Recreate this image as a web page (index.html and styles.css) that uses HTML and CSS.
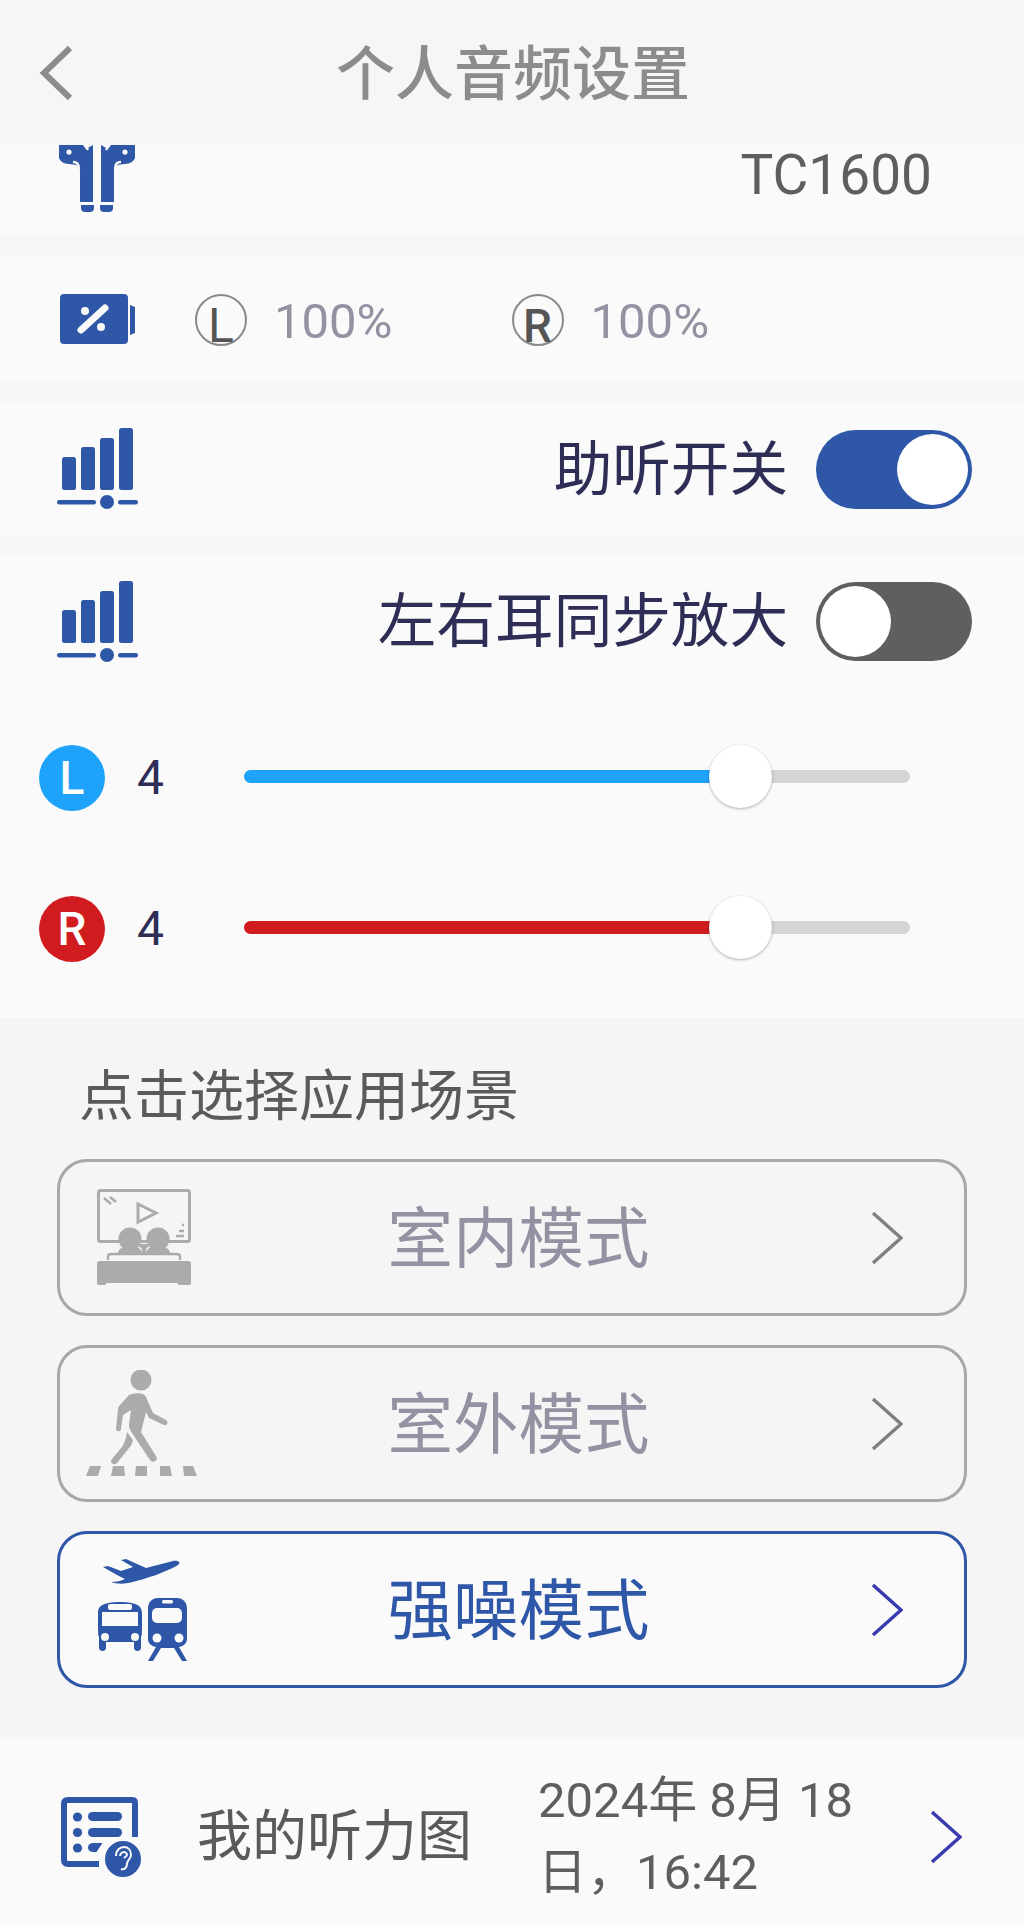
FILE: index.html
```html
<!DOCTYPE html>
<html lang="zh-CN">
<head>
<meta charset="utf-8">
<title>个人音频设置</title>
<link rel="stylesheet" href="styles.css">
</head>
<body>
<div class="page">
  <header class="header">
    <svg class="back" viewBox="38 38 36 60"><path d="M70 43 44 68l26 25" fill="none" stroke="#8c8c8c" stroke-width="6"/></svg>
    <h1 class="title">个人音频设置</h1>
  </header>

  <section class="card device">
    <svg class="buds" viewBox="58 145 78 68" fill="#2f57a8">
      <path d="M59 145h24l3 4 7-4v57H80v-31c0-3-1-5-4-6-2 0-4-1-7-1-5 0-9-3-10-6z"/>
      <path d="M135 145h-24l-3 4-7-4v57h13v-31c0-3 1-5 4-6 2 0 4-1 7-1 5 0 9-3 10-6z"/>
      <path d="M81 205h13v3c0 3-2 4-4 4h-5c-2 0-4-1-4-4zM100 205h13v3c0 3-2 4-4 4h-5c-2 0-4-1-4-4z"/>
      <circle cx="69" cy="152" r="2.6" fill="#fafafa"/><circle cx="125" cy="152" r="2.6" fill="#fafafa"/>
      <path d="M73 162c4 0 6 3 6 7M121 162c-4 0-6 3-6 7M85 145l3 5M109 145l-3 5" fill="none" stroke="#fafafa" stroke-width="2.4"/>
    </svg>
    <span class="model">TC1600</span>
  </section>

  <section class="card battery">
    <svg class="batt" viewBox="60 294 76 50">
      <rect x="60" y="294" width="68" height="50" rx="4" fill="#2f57a8"/>
      <path d="M130 305l5 2v26l-5 2z" fill="#2f57a8"/>
      <path d="M81 330l24-22" stroke="#fafafa" stroke-width="7" stroke-linecap="round"/>
      <circle cx="85" cy="311" r="4" fill="#fafafa"/><circle cx="101" cy="327" r="4" fill="#fafafa"/>
    </svg>
    <span class="ear ear-l">L</span>
    <span class="pct">100%</span>
    <span class="ear ear-r">R</span>
    <span class="pct">100%</span>
  </section>

  <section class="card switch-row">
    <svg class="level" viewBox="57 429 81 82" fill="#2f57a8">
      <rect x="62" y="458" width="14" height="33" rx="2.5"/><rect x="81" y="448" width="14" height="43" rx="2.5"/><rect x="100" y="439" width="14" height="52" rx="2.5"/><rect x="119" y="429" width="14" height="62" rx="2.5"/>
      <rect x="57" y="501" width="39" height="4.5" rx="2.2"/><circle cx="107" cy="503" r="7"/><rect x="118" y="501" width="20" height="4.5" rx="2.2"/>
    </svg>
    <span class="switch-label">助听开关</span>
    <span class="toggle toggle-on"><i class="toggle-knob"></i></span>
  </section>

  <section class="card gain">
    <div class="switch-row sync">
      <svg class="level" viewBox="57 429 81 82" fill="#2f57a8">
        <rect x="62" y="458" width="14" height="33" rx="2.5"/><rect x="81" y="448" width="14" height="43" rx="2.5"/><rect x="100" y="439" width="14" height="52" rx="2.5"/><rect x="119" y="429" width="14" height="62" rx="2.5"/>
        <rect x="57" y="501" width="39" height="4.5" rx="2.2"/><circle cx="107" cy="503" r="7"/><rect x="118" y="501" width="20" height="4.5" rx="2.2"/>
      </svg>
      <span class="switch-label">左右耳同步放大</span>
      <span class="toggle toggle-off"><i class="toggle-knob"></i></span>
    </div>
    <div class="slider-row">
      <span class="badge badge-l">L</span>
      <span class="value">4</span>
      <div class="track"><div class="fill fill-l" style="width:74.6%"></div><i class="thumb" style="left:74.6%"></i></div>
    </div>
    <div class="slider-row">
      <span class="badge badge-r">R</span>
      <span class="value">4</span>
      <div class="track"><div class="fill fill-r" style="width:74.6%"></div><i class="thumb" style="left:74.6%"></i></div>
    </div>
  </section>

  <section class="scenes">
    <h2 class="scenes-title">点击选择应用场景</h2>
    <div class="scene">
      <svg class="scene-icon" viewBox="96 1190 96 97">
        <rect x="98.5" y="1191.5" width="91" height="51" rx="2" fill="none" stroke="#ababab" stroke-width="3"/>
        <path d="M138 1205l18 9-18 9z" fill="none" stroke="#ababab" stroke-width="3"/>
        <path d="M104 1199l7 6M110 1198l6 5M176 1237h8M179 1232h5M182 1226h2" stroke="#ababab" stroke-width="2.4" fill="none"/>
        <g fill="#ababab">
          <circle cx="130" cy="1240" r="11.5"/><circle cx="158" cy="1240" r="11.5"/>
          <path d="M118 1255c0-5 4-8 12-8s12 3 12 8zM146 1255c0-5 4-8 12-8s12 3 12 8z"/>
          <path d="M137 1245h14l-5 5v4h-4v-4z"/>
          <path d="M97 1265c0-2 1-3 3-3h88c2 0 3 1 3 3v19c0 1-1 2-2 2h-10l-2-2h-70l-2 2H99c-1 0-2-1-2-2z"/>
        </g>
        <path d="M108 1261v-3c0-2 1-3 3-3h66c2 0 3 1 3 3v3" fill="none" stroke="#ababab" stroke-width="2.4"/>
      </svg>
      <span class="scene-name">室内模式</span>
      <svg class="chev" viewBox="0 0 32 54"><path d="M2 2l28 25L2 52" fill="none" stroke="#808080" stroke-width="3.5"/></svg>
    </div>
    <div class="scene">
      <svg class="scene-icon" viewBox="86 1370 112 108">
        <g fill="#ababab">
          <circle cx="141" cy="1380" r="10.5"/>
          <path d="M129 1395c5-2 15-3 17 2l7 16 13 7c3 2 1 6-2 5l-15-7-3-6-5 20 15 24c3 4-3 8-6 4l-18-27c-2-3-3-5-3-8l2-15-8 5-2 14c0 3-5 3-5 0l2-20c0-2 1-3 2-4z"/>
          <path d="M127 1432l6 8c-1 4-2 6-4 8l-12 15c-3 3-8 0-5-4l10-12c3-5 4-9 5-15z"/>
          <path d="M90 1466h11l-3 10H86zM113 1466h11l1 10h-14zM136 1466h11v10h-12zM160 1466h10l2 10h-12zM183 1466h10l4 10h-13z"/>
        </g>
      </svg>
      <span class="scene-name">室外模式</span>
      <svg class="chev" viewBox="0 0 32 54"><path d="M2 2l28 25L2 52" fill="none" stroke="#808080" stroke-width="3.5"/></svg>
    </div>
    <div class="scene scene-active">
      <svg class="scene-icon" viewBox="96 1560 96 106">
        <g fill="#2f57a8">
          <path d="M121 1563l5-1 20 9 27-7c6-1 8 2 5 4-8 5-30 14-50 18-6 1-12 1-17-1 6 0 10-1 14-3l-8-4-14-8 5-1 13 5 12-4z"/>
          <path d="M98 1630v-14c0-7 5-11 22-11s22 4 22 11v14c0 5 0 8-1 10v11c0 4-7 4-7 0v-6h-28v6c0 4-7 4-7 0v-11c-1-2-1-5-1-10z"/>
          <path d="M148 1612c0-7 4-11 10-11h19c6 0 10 4 10 11v30c0 4-3 7-8 8l8 14h-5l-8-13h-13l-8 13h-5l8-14c-5-1-8-4-8-8z"/>
        </g>
        <g fill="#fafafa">
          <rect x="108" y="1607" width="24" height="6" rx="2"/>
          <path d="M102 1615h36v14h-36z"/>
          <circle cx="105" cy="1640" r="4"/><circle cx="135" cy="1640" r="4"/>
          <rect x="162" y="1603" width="11" height="3.5" rx="1.5"/>
          <rect x="152" y="1611" width="30" height="15" rx="5"/>
          <circle cx="157" cy="1641" r="4.5"/><circle cx="179" cy="1641" r="4.5"/>
        </g>
      </svg>
      <span class="scene-name">强噪模式</span>
      <svg class="chev" viewBox="0 0 32 54"><path d="M2 2l28 25L2 52" fill="none" stroke="#3a3ab0" stroke-width="3.5"/></svg>
    </div>
  </section>

  <section class="card hearing">
    <svg class="report" viewBox="60 1798 82 82">
      <path d="M99 1866H68c-3 0-4-2-4-4v-56c0-3 1-4 4-4h64c3 0 3 1 3 4v33" fill="none" stroke="#2f57a8" stroke-width="6"/>
      <g fill="#2f57a8">
        <circle cx="77.5" cy="1819" r="4.6"/><circle cx="77.5" cy="1834.5" r="4.6"/><circle cx="77.5" cy="1850" r="4.6"/>
        <rect x="88" y="1814" width="34" height="9" rx="4.5"/><rect x="88" y="1830" width="34" height="9" rx="4.5"/><path d="M92.5 1845h10l-6 9h-4c-6 0-6-9 0-9z"/>
        <circle cx="123" cy="1861" r="19" stroke="#fafafa" stroke-width="2"/>
      </g>
      <path d="M116 1858c0-6 4-9 8-9s7 3 7 8c0 4-4 5-4 9s-3 6-6 5M120 1858c0-2 2-4 4-4s3 2 3 3-2 2-3 3" fill="none" stroke="#fafafa" stroke-width="2"/>
    </svg>
    <span class="hearing-label">我的听力图</span>
    <span class="hearing-date">2024年 8月 18日，16:42</span>
    <svg class="chev" viewBox="0 0 32 54"><path d="M2 2l28 25L2 52" fill="none" stroke="#3a3ab0" stroke-width="3.5"/></svg>
  </section>
</div>
</body>
</html>
```

FILE: styles.css
```css
* { box-sizing: border-box; }
html, body { margin: 0; padding: 0; }
body {
  width: 1024px;
  background: #f6f6f6;
  font-family: Roboto, "Noto Sans CJK SC", sans-serif;
}
.page { display: flex; flex-direction: column; height: 1924px; overflow: hidden; }

.header { height: 145px; display: flex; align-items: center; padding-left: 38px; position: relative; }
.back { width: 36px; height: 60px; }
.title {
  margin: 4px 0 0 -36px; padding-right: 36px; flex: 1; text-align: center;
  font-size: 59px; font-weight: 500; color: #8c8c8c; line-height: 1;
}

.card { background: #fafafa; }

.device { height: 91px; display: flex; align-items: flex-start; padding-left: 58px; margin-bottom: 20px; }
.buds { width: 78px; height: 68px; }
.model { margin-left: auto; margin-right: 92px; font-size: 55px; line-height: 61px; color: #5e5e5e; }

.battery { height: 126px; display: flex; align-items: center; padding: 1px 0 0 60px; margin-bottom: 20px; }
.batt { width: 76px; height: 50px; margin-top: -1px; }
.ear {
  width: 52px; height: 52px; border: 2.5px solid #8a8a8a; border-radius: 50%;
  display: flex; justify-content: center; color: #555;
}
.ear-l { margin-left: 59px; font-size: 48px; font-weight: 400; line-height: 60px; }
.ear-r { margin-left: 119px; font-size: 46px; font-weight: 500; line-height: 60px; }
.pct { margin-left: 27px; padding-top: 3px; font-size: 49px; color: #9292a2; line-height: 1; }

.switch-row { display: flex; align-items: center; padding: 0 52px 0 57px; }
.card.switch-row { height: 134px; margin-bottom: 19px; }
.level { width: 81px; height: 82px; }
.switch-label { margin-left: auto; margin-right: 28px; padding-top: 2px; font-size: 58.6px; line-height: 1; color: #2e2d55; }
.toggle { width: 156px; height: 79px; border-radius: 40px; position: relative; display: block; }
.toggle-on { background: #2f57a8; }
.toggle-off { background: #5f5f5f; }
.toggle-knob { position: absolute; top: 4px; width: 71px; height: 71px; border-radius: 50%; background: #fff; }
.toggle-on .toggle-knob { right: 4px; }
.toggle-off .toggle-knob { left: 4px; }

.gain { height: 463px; padding-top: 27px; }
.sync { height: 79px; margin-bottom: 84px; }
.slider-row { display: flex; align-items: center; height: 66px; padding-left: 39px; margin-bottom: 85px; }
.slider-row:last-child { margin-bottom: 0; }
.badge {
  width: 66px; height: 66px; border-radius: 50%; color: #fff; font-size: 46px; font-weight: 500;
  display: flex; align-items: center; justify-content: center; line-height: 1;
}
.badge-l { background: #1ea3fb; }
.badge-r { background: #d01c1f; }
.value { width: 139px; padding-left: 32px; font-size: 48px; line-height: 1; color: #2e2d55; }
.track { width: 666px; height: 13px; border-radius: 7px; background: #d4d4d4; position: relative; margin-top: -3px; }
.fill { height: 100%; border-radius: 7px 0 0 7px; }
.fill-l { background: #1ea3fb; }
.fill-r { background: #d01c1f; }
.thumb {
  position: absolute; top: 50%; width: 63px; height: 63px; margin: -31.5px 0 0 -31.5px;
  border-radius: 50%; background: #fff; box-shadow: 0 1px 3px rgba(0,0,0,.3);
}

.scenes { height: 719px; padding: 42px 57px 0 57px; background: #f5f5f6; display: flex; flex-direction: column; gap: 29px; }
.scenes-title { margin: 0 0 0 22px; height: 70px; font-size: 55px; font-weight: 400; line-height: 72px; color: #5a5a5a; }
.scene {
  height: 157px; border: 3px solid #a8a8a8; border-radius: 30px;
  display: flex; align-items: center; padding: 0 61px 0 36px;
}
.scene-active { border-color: #2f57a8; background: #fafafa; }
.scene-icon { width: 96px; height: 97px; flex: none; }
.scene:nth-of-type(2) .scene-icon { width: 112px; height: 108px; margin-left: -10px; margin-right: -6px; }
.scene-active .scene-icon { height: 106px; }
.scene-name { flex: 1; text-align: center; padding: 4px 26px 0 0; font-size: 65.5px; line-height: 1; color: #9292a2; }
.scene-active .scene-name { color: #2f57a8; }
.chev { width: 32px; height: 54px; flex: none; }

.hearing { height: 187px; display: flex; align-items: center; padding: 12px 0 0 60px; }
.report { width: 82px; height: 82px; flex: none; }
.hearing-label { margin-left: 55px; font-size: 55px; line-height: 1; color: #5a5a5a; white-space: nowrap; }
.hearing-date { margin-left: 66px; width: 320px; font-size: 49px; line-height: 72px; color: #5e5e5e; }
.hearing .chev { margin-left: 72px; }
```
